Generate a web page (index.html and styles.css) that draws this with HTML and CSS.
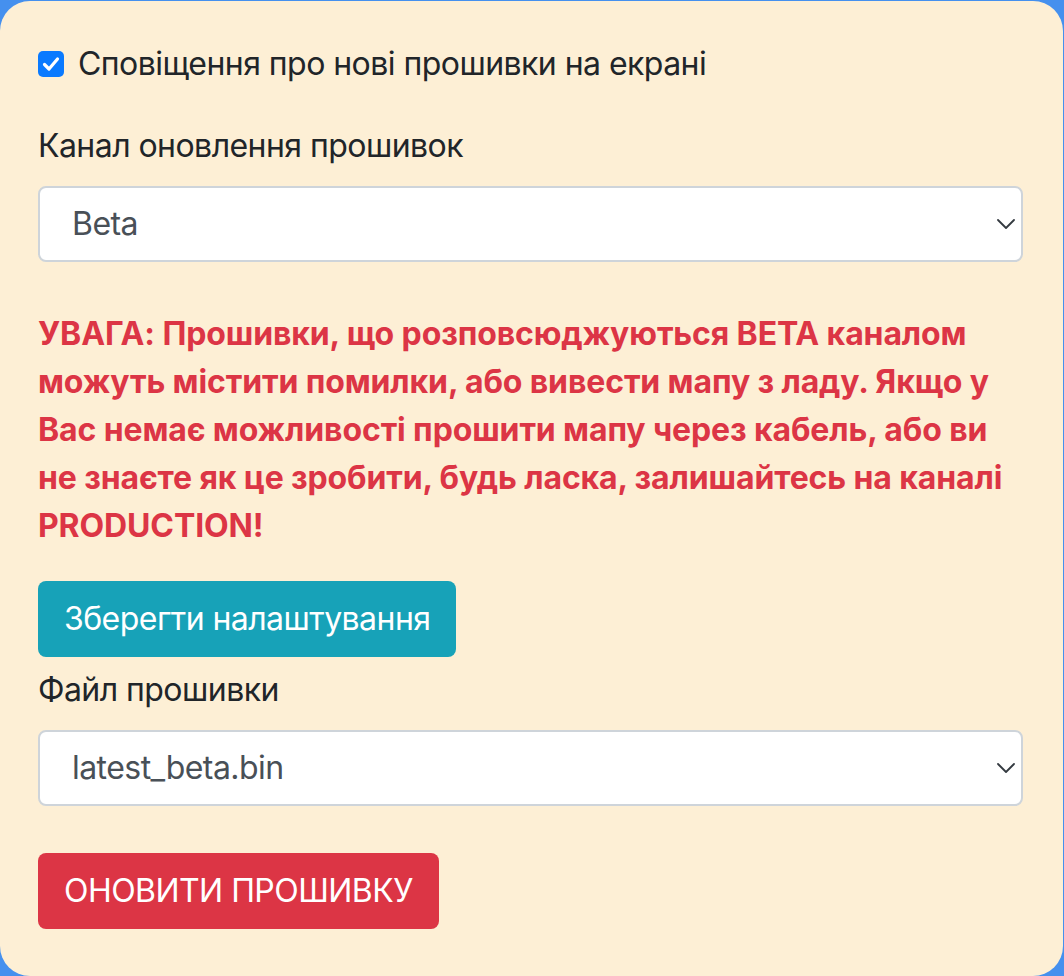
FILE: index.html
```html
<!DOCTYPE html>
<html lang="uk">
<head>
<meta charset="utf-8">
<title>Оновлення прошивки</title>
<link rel="stylesheet" href="styles.css">
</head>
<body>
<div class="card">
  <label class="check-row">
    <span class="checkbox">
      <svg viewBox="0 0 26 26" width="26" height="26"><path d="M6.5 13.5l4.5 4.5 8.5-10" fill="none" stroke="#fff" stroke-width="3.2" stroke-linecap="round" stroke-linejoin="round"/></svg>
    </span>
    <span>Сповіщення про нові прошивки на екрані</span>
  </label>

  <div class="group">
    <div class="label">Канал оновлення прошивок</div>
    <div class="select">
      <span>Beta</span>
      <svg class="chev" viewBox="0 0 18 10" width="18" height="10"><path d="M1 1l8 8 8-8" fill="none" stroke="#343a40" stroke-width="1.8" stroke-linecap="round" stroke-linejoin="round"/></svg>
    </div>
  </div>

  <p class="warning">УВАГА: Прошивки, що розповсюджуються BETA каналом можуть містити помилки, або вивести мапу з ладу. Якщо у Вас немає можливості прошити мапу через кабель, або ви не знаєте як це зробити, будь ласка, залишайтесь на каналі PRODUCTION!</p>

  <div class="btn btn-info">Зберегти налаштування</div>

  <div class="group group-file">
    <div class="label">Файл прошивки</div>
    <div class="select">
      <span>latest_beta.bin</span>
      <svg class="chev" viewBox="0 0 18 10" width="18" height="10"><path d="M1 1l8 8 8-8" fill="none" stroke="#343a40" stroke-width="1.8" stroke-linecap="round" stroke-linejoin="round"/></svg>
    </div>
  </div>

  <div class="btn btn-danger">ОНОВИТИ ПРОШИВКУ</div>
</div>
</body>
</html>
```

FILE: styles.css
```css
html, body {
  margin: 0;
  padding: 0;
}
body {
  background: #4590ee;
  font-family: "Inter", "Noto Sans", sans-serif;
  font-size: 32px;
  line-height: 48px;
  letter-spacing: -0.55px;
  color: #212529;
}
.card {
  box-sizing: border-box;
  height: 975px;
  margin: 1px 1px 0 0;
  background: #fdefd5;
  border-radius: 30px;
  padding: 39px 40px 0 38px;
  display: flex;
  flex-direction: column;
  align-items: flex-start;
}
.check-row {
  display: flex;
  align-items: center;
  gap: 14px;
  margin-bottom: 34px;
}
.checkbox {
  width: 26px;
  height: 26px;
  border-radius: 5px;
  background: #0a7aff;
  display: flex;
  align-items: center;
  justify-content: center;
}
.checkbox svg {
  display: block;
}
.group {
  align-self: stretch;
}
.label {
  margin-bottom: 16px;
}
.select {
  box-sizing: border-box;
  height: 76px;
  border: 2px solid #ced4da;
  border-radius: 8px;
  background: #fff;
  color: #495057;
  padding: 0 6px 0 32px;
  display: flex;
  align-items: center;
  justify-content: space-between;
}
.chev {
  display: block;
}
.warning {
  margin: 48px 0 31px;
  color: #dc3545;
  font-weight: 700;
  letter-spacing: -0.12px;
}
.btn {
  box-sizing: border-box;
  height: 76px;
  padding: 0 26px;
  border-radius: 8px;
  color: #fff;
  display: flex;
  align-items: center;
}
.btn-info {
  background: #17a2b8;
}
.btn-danger {
  background: #dc3545;
  margin-top: 47px;
}
.group-file {
  margin-top: 9px;
}
```
